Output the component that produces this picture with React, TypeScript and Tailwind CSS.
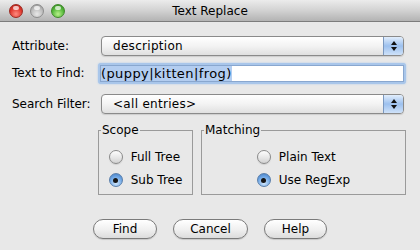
import React from 'react';

function Light({ tone }: { tone: 'red' | 'gray' | 'green' }) {
  const body =
    tone === 'red'
      ? 'bg-[radial-gradient(circle_at_50%_75%,#ff8c80,#e0392f_55%,#a81b12)] border-[#9c2a22]'
      : tone === 'green'
        ? 'bg-[radial-gradient(circle_at_50%_75%,#b8f08a,#54b83a_55%,#2f7d1d)] border-[#3f8a2a]'
        : 'bg-[radial-gradient(circle_at_50%_75%,#e8e8e8,#bdbdbd_55%,#8f8f8f)] border-[#8d8d8d]';
  return (
    <div className={`relative w-[14px] h-[14px] rounded-full border ${body}`}>
      <div className="absolute left-[3px] top-[1px] w-[6px] h-[4px] rounded-full bg-white/70" />
    </div>
  );
}

function Combo({ text }: { text: string }) {
  return (
    <div className="flex h-[20px] ml-[3px] mr-[2px] rounded-[4px] border border-[#8a8a8a] bg-linear-to-b from-white via-[#f3f3f3] to-[#e0e0e0] shadow-[0_1px_1px_rgba(0,0,0,0.12)]">
      <span className="flex-1 pl-[11px] text-[12px] leading-[18px] tracking-[0.3px] text-black">{text}</span>
      <div className="w-[20px] flex flex-col items-center justify-center gap-[2px] rounded-r-[3px] border-l border-[#7b98bf] bg-linear-to-b from-[#e2eefc] via-[#9cc0ee] to-[#cfe2f9]">
        <svg width="6" height="4" viewBox="0 0 6 4"><path d="M3 0 L6 4 L0 4 Z" fill="#111" /></svg>
        <svg width="6" height="4" viewBox="0 0 6 4"><path d="M0 0 L6 0 L3 4 Z" fill="#111" /></svg>
      </div>
    </div>
  );
}

function Radio({ label, checked }: { label: string; checked?: boolean }) {
  return (
    <div className="flex items-center gap-[8px] h-[16px]">
      {checked ? (
        <div className="w-[14px] h-[14px] rounded-full border border-[#5a7fab] bg-[radial-gradient(circle_at_50%_75%,#d3e8fc,#72a9e6_55%,#3d78c0)] flex items-center justify-center">
          <div className="w-[5px] h-[5px] rounded-full bg-[#151515]" />
        </div>
      ) : (
        <div className="w-[14px] h-[14px] rounded-full border border-[#8a8a8a] bg-linear-to-b from-[#fdfdfd] via-[#e9e9e9] to-[#d2d2d2] shadow-[0_1px_1px_rgba(0,0,0,0.1)]" />
      )}
      <span className="text-[12px] leading-[14px] text-black">{label}</span>
    </div>
  );
}

function Group({ title, className, children }: { title: string; className: string; children: React.ReactNode }) {
  return (
    <fieldset className={`h-[72px] border border-[#9a9a9a] ${className}`}>
      <legend className="ml-[2px] px-[1px] text-[12px] leading-[14px] text-black">{title}</legend>
      <div className="flex justify-center pt-[12px]">
        <div className="flex flex-col gap-[7px]">{children}</div>
      </div>
    </fieldset>
  );
}

function Button({ label, width }: { label: string; width: string }) {
  return (
    <button className={`${width} h-[20px] rounded-full border border-[#7a7a7a] bg-linear-to-b from-white via-[#f1f1f1] to-[#dcdcdc] text-[12px] leading-[18px] text-black shadow-[0_1px_1px_rgba(0,0,0,0.15)]`}>
      {label}
    </button>
  );
}

export default function App() {
  return (
    <div className="w-[420px] h-[250px] bg-[#e8e8e8] font-['DejaVu_Sans',sans-serif] overflow-hidden">
      <div className="grid grid-cols-[1fr_auto_1fr] items-center h-[22px] border-b border-[#7c7c7c] bg-linear-to-b from-[#ececec] via-[#d2d2d2] to-[#b3b3b3]">
        <div className="flex items-center gap-[7px] pl-[9px]">
          <Light tone="red" />
          <Light tone="gray" />
          <Light tone="green" />
        </div>
        <span className="text-[12px] leading-[14px] text-black">Text Replace</span>
        <div />
      </div>

      <div className="px-[12px] pt-[13px]">
        <div className="flex items-center h-[22px]">
          <span className="w-[86px] text-[12px] text-black">Attribute:</span>
          <div className="w-[308px]"><Combo text="description" /></div>
        </div>

        <div className="flex items-center h-[22px] mt-[5px]">
          <span className="w-[86px] text-[12px] text-black">Text to Find:</span>
          <div className="w-[308px] h-[21px] p-[2px] rounded-[3px] bg-[#a9c6ea] shadow-[0_0_2px_#a9c6ea]">
            <div className="h-full bg-white border border-[#89a7cf] flex items-center">
              <span className="bg-[#b3cdf0] text-[13px] leading-[15px] tracking-[0.4px] text-black">(puppy|kitten|frog)</span>
            </div>
          </div>
        </div>

        <div className="flex items-center h-[22px] mt-[9px]">
          <span className="w-[86px] text-[12px] text-black">Search Filter:</span>
          <div className="w-[308px]"><Combo text="<all entries>" /></div>
        </div>

        <div className="flex gap-[8px] ml-[86px] w-[308px] mt-[8px]">
          <Group title="Scope" className="w-[95px]">
            <Radio label="Full Tree" />
            <Radio label="Sub Tree" checked />
          </Group>
          <Group title="Matching" className="flex-1">
            <Radio label="Plain Text" />
            <Radio label="Use RegExp" checked />
          </Group>
        </div>
      </div>

      <div className="flex justify-center gap-[16px] mt-[24px]">
        <Button label="Find" width="w-[64px]" />
        <Button label="Cancel" width="w-[75px]" />
        <Button label="Help" width="w-[63px]" />
      </div>
    </div>
  );
}
